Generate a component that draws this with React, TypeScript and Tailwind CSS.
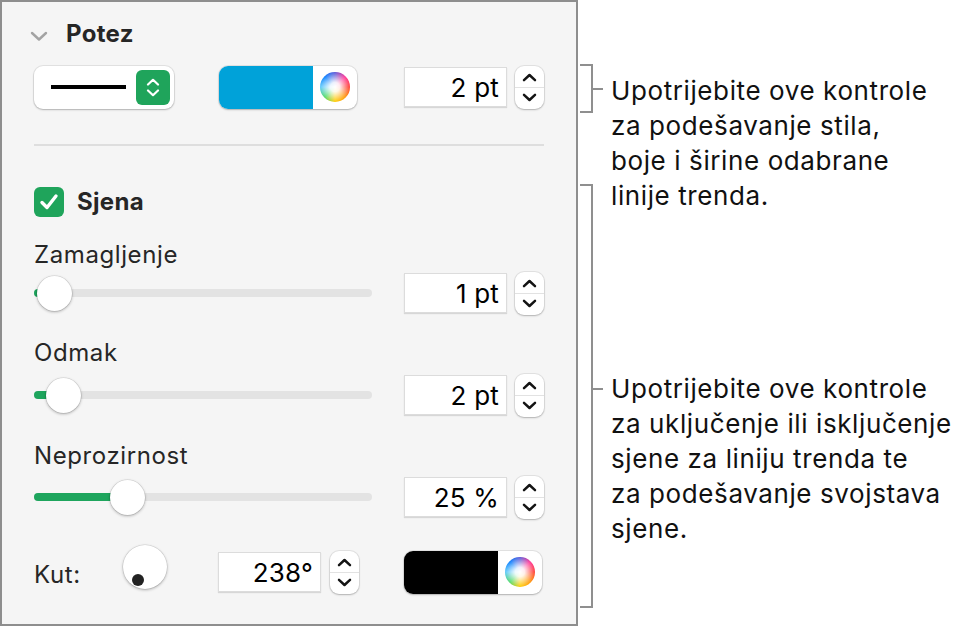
import React from "react";

const FONT = { fontFamily: 'Inter, "Liberation Sans", "Noto Sans", sans-serif' };

function UpChev() {
  return (
    <svg width="15" height="9" viewBox="0 0 15 9">
      <path d="M2 7.2 L7.5 2 L13 7.2" fill="none" stroke="#141414" strokeWidth="2.5" strokeLinecap="round" strokeLinejoin="round" />
    </svg>
  );
}
function DownChev() {
  return (
    <svg width="15" height="9" viewBox="0 0 15 9">
      <path d="M2 1.8 L7.5 7 L13 1.8" fill="none" stroke="#141414" strokeWidth="2.5" strokeLinecap="round" strokeLinejoin="round" />
    </svg>
  );
}

function Stepper() {
  return (
    <div className="flex h-[43px] w-[29px] flex-col overflow-hidden rounded-[9px] bg-white shadow-[0_0_0_1px_rgba(0,0,0,0.07),0_1px_2px_rgba(0,0,0,0.22)]">
      <div className="flex flex-1 items-center justify-center border-b border-[#e2e2e2] pt-[2px]">
        <UpChev />
      </div>
      <div className="flex flex-1 items-center justify-center pb-[2px]">
        <DownChev />
      </div>
    </div>
  );
}

function Field({ value }: { value: string }) {
  return (
    <div className="flex h-[40px] w-[103px] items-center justify-end border border-[#dcdcdc] bg-white pr-[7px] text-[26px] tracking-[0.2px] text-black shadow-[0_1px_1px_rgba(0,0,0,0.12)]">
      {value}
    </div>
  );
}

function Wheel() {
  return (
    <div
      className="h-[30px] w-[30px] rounded-full"
      style={{
        background:
          "radial-gradient(circle, #ffffff 0%, rgba(255,255,255,0.9) 22%, rgba(255,255,255,0) 72%), conic-gradient(from 90deg, #ff3b30, #ff9500, #ffcc00, #4cd964, #5ac8fa, #007aff, #5856d6, #ff2d92, #ff3b30)",
      }}
    />
  );
}

function ColorWell({ color }: { color: string }) {
  return (
    <div className="flex h-[43px] w-[138px] overflow-hidden rounded-[9px] bg-white shadow-[0_0_0_1px_rgba(0,0,0,0.07),0_1px_2px_rgba(0,0,0,0.22)]">
      <div className={`w-[94px] ${color}`} />
      <div className="flex flex-1 items-center justify-center">
        <Wheel />
      </div>
    </div>
  );
}

function Slider({ knob }: { knob: number }) {
  return (
    <div className="relative h-[44px] w-[338px]">
      <div className="absolute left-0 right-0 top-[18px] h-[8px] rounded-full bg-[#e3e3e3]" />
      <div
        className="absolute left-0 top-[18px] h-[8px] rounded-full bg-[#1ea55d]"
        style={{ width: knob }}
      />
      <div
        className="absolute top-[4.5px] h-[35px] w-[35px] rounded-full bg-white shadow-[0_0_0_0.5px_rgba(0,0,0,0.12),0_1px_3px_rgba(0,0,0,0.3)]"
        style={{ left: knob - 17.5 }}
      />
    </div>
  );
}

function SliderRow({ knob, value, mt }: { knob: number; value: string; mt: string }) {
  return (
    <div className={`flex h-[44px] items-center ${mt}`}>
      <Slider knob={knob} />
      <div className="ml-[32px]">
        <Field value={value} />
      </div>
      <div className="ml-[8px]">
        <Stepper />
      </div>
    </div>
  );
}

export default function App() {
  return (
    <div className="flex h-[627px] w-[964px] bg-white text-[#262626]" style={FONT}>
      {/* Inspector panel */}
      <div className="flex h-[626px] w-[578px] flex-col border-2 border-[#8e8e8e] bg-[#f5f5f5] px-[32px]">
        {/* Header */}
        <div className="ml-[-4px] mt-[16px] flex h-[32px] items-center">
          <svg width="18" height="12" viewBox="0 0 18 12" className="mt-[4px]">
            <path d="M2 3 L9 9.5 L16 3" fill="none" stroke="#a3a3a3" strokeWidth="2.4" strokeLinecap="round" strokeLinejoin="round" />
          </svg>
          <span className="ml-[18px] text-[24px] font-bold leading-[32px] tracking-[0.3px] text-[#262626]">Potez</span>
        </div>

        {/* Row 1 */}
        <div className="mt-[15px] flex h-[44px] items-center">
          <div className="flex h-[43px] w-[141px] items-center rounded-[9px] bg-white pl-[17px] pr-[4px] shadow-[0_0_0_1px_rgba(0,0,0,0.07),0_1px_2px_rgba(0,0,0,0.22)]">
            <div className="h-[4px] w-[75px] bg-black" />
            <div className="ml-auto flex h-[35px] w-[34px] flex-col items-center justify-center gap-[3px] rounded-[6px] bg-[#1fa45b]">
              <svg width="14" height="8" viewBox="0 0 14 8">
                <path d="M2 6.5 L7 1.8 L12 6.5" fill="none" stroke="#fff" strokeWidth="2.2" strokeLinecap="round" strokeLinejoin="round" />
              </svg>
              <svg width="14" height="8" viewBox="0 0 14 8">
                <path d="M2 1.5 L7 6.2 L12 1.5" fill="none" stroke="#fff" strokeWidth="2.2" strokeLinecap="round" strokeLinejoin="round" />
              </svg>
            </div>
          </div>
          <div className="ml-[45px]">
            <ColorWell color="bg-[#00a2d9]" />
          </div>
          <div className="ml-[47px]">
            <Field value="2 pt" />
          </div>
          <div className="ml-[8px]">
            <Stepper />
          </div>
        </div>

        {/* Divider */}
        <div className="mt-[35px] h-[2px] w-[510px] bg-[#dedede]" />

        {/* Checkbox */}
        <div className="mt-[41px] flex h-[30px] items-center">
          <div className="flex h-[30px] w-[30px] items-center justify-center rounded-[6px] bg-[#1fa45b]">
            <svg width="22" height="20" viewBox="0 0 22 20">
              <path d="M4 10.5 L9 15.5 L18 4" fill="none" stroke="#fff" strokeWidth="3.4" strokeLinecap="round" strokeLinejoin="round" />
            </svg>
          </div>
          <span className="ml-[13px] text-[24px] font-bold leading-[30px] tracking-[0.3px] text-[#262626]">Sjena</span>
        </div>

        <div className="mt-[26px] h-[24px] text-[24px] leading-[24px] tracking-[0.6px]">Zamagljenje</div>
        <SliderRow knob={20} value="1 pt" mt="mt-[4px]" />

        <div className="mt-[26px] h-[24px] text-[24px] leading-[24px] tracking-[0.6px]">Odmak</div>
        <SliderRow knob={29} value="2 pt" mt="mt-[8px]" />

        <div className="mt-[27px] h-[24px] text-[24px] leading-[24px] tracking-[0.6px]">Neprozirnost</div>
        <SliderRow knob={93} value="25 %" mt="mt-[7px]" />

        {/* Kut row */}
        <div className="mt-[31px] flex h-[44px] items-center">
          <div className="mt-[6px] w-[89px] shrink-0 text-[24px] leading-[24px] tracking-[0.6px]">Kut:</div>
          <div className="relative mt-[-10px] h-[44px] w-[44px] shrink-0 rounded-full bg-white shadow-[0_0_0_0.5px_rgba(0,0,0,0.12),0_1px_3px_rgba(0,0,0,0.3)]">
            <div className="absolute left-[9px] top-[29px] h-[12px] w-[12px] rounded-full bg-[#222]" />
          </div>
          <div className="ml-[51px]">
            <Field value="238°" />
          </div>
          <div className="ml-[9px]">
            <Stepper />
          </div>
          <div className="ml-[45px]">
            <ColorWell color="bg-black" />
          </div>
        </div>
      </div>

      {/* Callout brackets */}
      <svg width="33" height="627" viewBox="0 0 33 627" className="shrink-0">
        <g fill="none" stroke="#8f8f8f" strokeWidth="2">
          <path d="M2 65 H14 V112 H2" />
          <path d="M14 89 H25" />
          <path d="M2 185 H14 V607 H2" />
          <path d="M14 389 H25" />
        </g>
      </svg>

      {/* Callout text */}
      <div className="flex flex-col whitespace-nowrap text-[26px] leading-[35px] tracking-[0.6px] text-[#111]">
        <div className="mt-[73px]">
          Upotrijebite ove kontrole
          <br />
          za podešavanje stila,
          <br />
          boje i širine odabrane
          <br />
          linije trenda.
        </div>
        <div className="mt-[158px]">
          Upotrijebite ove kontrole
          <br />
          za uključenje ili isključenje
          <br />
          sjene za liniju trenda te
          <br />
          za podešavanje svojstava
          <br />
          sjene.
        </div>
      </div>
    </div>
  );
}
